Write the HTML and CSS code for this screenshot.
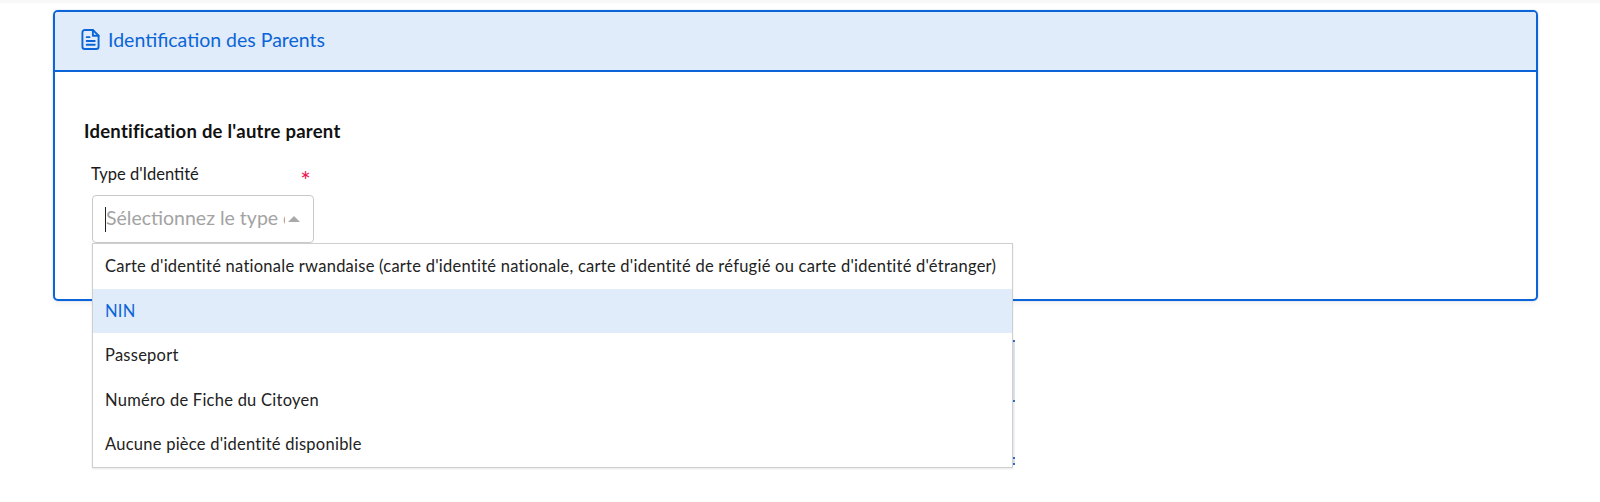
FILE: index.html
```html
<!DOCTYPE html>
<html lang="fr">
<head>
    <meta charset="UTF-8">
    <title>Identification des Parents</title>
    <link rel="stylesheet" href="styles.css">
</head>
<body>
    <div class="panel">
        <div class="panel-head">
            <svg class="head-icon" viewBox="0 0 20 24" fill="none" stroke="currentColor" stroke-width="2" stroke-linejoin="round" stroke-linecap="round">
                <path d="M12.5 2H4a2.5 2.5 0 0 0-2.5 2.5v15A2.5 2.5 0 0 0 4 22h12a2.5 2.5 0 0 0 2.5-2.5V8z"/>
                <path d="M12.5 2v6h6"/>
                <path d="M6 9.5h3M6 13.5h8.500M6 17.5h8.500"/>
            </svg>
            <span>Identification des Parents</span>
        </div>
        <div class="panel-body">
            <h3>Identification de l'autre parent</h3>
            <div class="field">
                <div class="field-label">
                    <label>Type d'Identité</label>
                    <span class="req">*</span>
                </div>
                <div class="select-box">
                    <span class="caret"></span>
                    <span class="placeholder">Sélectionnez le type d'identité</span>
                    <span class="arrow"></span>
                </div>
                <div class="under-edge"></div>
                <ul class="dropdown">
                    <li>Carte d'identité nationale rwandaise (carte d'identité nationale, carte d'identité de réfugié ou carte d'identité d'étranger)</li>
                    <li class="active">NIN</li>
                    <li>Passeport</li>
                    <li>Numéro de Fiche du Citoyen</li>
                    <li>Aucune pièce d'identité disponible</li>
                </ul>
            </div>
        </div>
    </div>
</body>
</html>
```

FILE: styles.css
```css
html, body {
    height: 100%;
}
body {
    box-sizing: border-box;
    min-height: 502px;
    margin: 0;
    padding: 7px 62px 0 53px;
    border-top: 3px solid #f8f8f8;
    font-family: Lato, "Open Sans", sans-serif;
    background-color: #fff;
    color: #1a1a1a;
}
.panel {
    height: 291px;
    box-sizing: border-box;
    border: 2px solid #0b65d8;
    border-radius: 5px;
    box-shadow: 0 0 1px rgba(11, 101, 216, 0.7), 0 3px 6px rgba(0, 0, 0, 0.05);
}
.panel-head {
    display: flex;
    align-items: center;
    gap: 8px;
    height: 55px;
    padding: 0 0 3px 26px;
    background: #e0ecf9;
    border-bottom: 2px solid #0b65d8;
    border-radius: 3px 3px 0 0;
    color: #0b65d8;
    font-size: 19.5px;
}
.head-icon {
    width: 19px;
    height: 23px;
}
.panel-body {
    padding: 49px 29px 0;
}
h3 {
    margin: 0;
    font-size: 18.5px;
    letter-spacing: 0.25px;
    font-weight: 700;
    line-height: 20px;
    color: #111;
}
.field {
    position: relative;
    margin: 23px 0 0 8px;
}
.field-label {
    display: flex;
    width: 222px;
    height: 31px;
    font-size: 16.5px;
    line-height: 20px;
    margin-left: -1px;
}
.req {
    margin-left: auto;
    margin-right: 2px;
    color: #f0164f;
    font-size: 25px;
    line-height: 32px;
}
.select-box {
    display: flex;
    align-items: center;
    box-sizing: border-box;
    width: 222px;
    height: 48px;
    padding: 0 13px 0 12px;
    border: 1px solid #c9c9c9;
    border-radius: 4px;
    background: #fff;
}
.caret {
    flex: none;
    width: 1px;
    height: 25px;
    background: #222;
}
.placeholder {
    flex: 1;
    overflow: hidden;
    white-space: nowrap;
    margin-right: 3px;
    padding-bottom: 3px;
    font-size: 19.5px;
    color: #a3a3a3;
}
.arrow {
    flex: none;
    border-left: 6px solid transparent;
    border-right: 6px solid transparent;
    border-bottom: 6px solid #a9a9a9;
}
/* bits of the fields hidden behind the open list */
.under-edge {
    position: absolute;
    top: 176px;
    left: 921px;
    width: 2px;
    height: 125px;
    background: linear-gradient(#2f6fc9 0 2px, #dde3ec 2px 60px, #2f6fc9 60px 62px, #eef1f5 62px 117px, #2f6fc9 117px 119px, #dde3ec 119px 123px, #2f6fc9 123px);
}
.dropdown {
    position: absolute;
    top: 79px;
    left: 0;
    width: 921px;
    box-sizing: border-box;
    margin: 0;
    padding: 0;
    list-style: none;
    background: #fff;
    border: 1px solid #cfcfcf;
    box-shadow: 0 1px 2px rgba(0, 0, 0, 0.1);
    font-size: 16.5px;
    letter-spacing: 0.25px;
    color: #222;
}
.dropdown li {
    height: 44.6px;
    line-height: 44.6px;
    padding-left: 12px;
    white-space: nowrap;
}
.dropdown .active {
    background: #e0ecf9;
    color: #0b65d8;
}
```
